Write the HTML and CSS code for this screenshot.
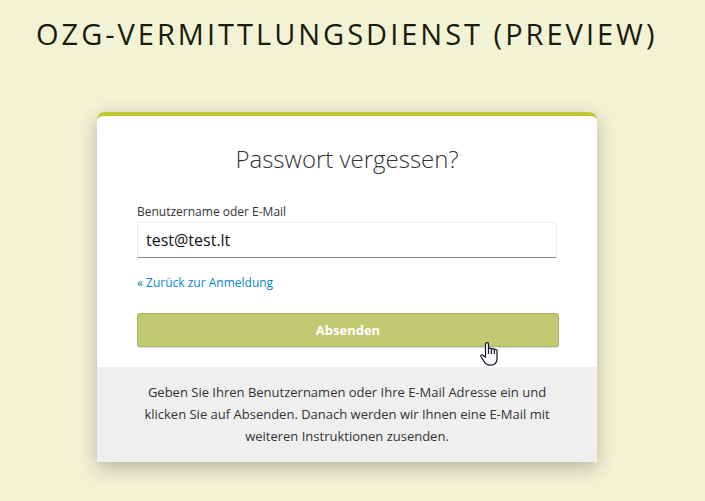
FILE: index.html
```html
<!DOCTYPE html>
<html lang="de">
<head>
<meta charset="utf-8">
<title>Passwort vergessen</title>
<link rel="stylesheet" href="styles.css">
</head>
<body>
<header class="brand">OZG-Vermittlungsdienst (Preview)</header>
<main class="card">
  <h1 class="title">Passwort vergessen?</h1>
  <form class="form">
    <label class="label" for="user">Benutzername oder E-Mail</label>
    <input class="input" id="user" type="text" value="test@test.lt">
    <p class="back"><a href="#">« Zurück zur Anmeldung</a></p>
    <button class="submit" type="button">Absenden
      <svg class="cursor" viewBox="0 0 18 24" width="18" height="24" aria-hidden="true">
        <path d="M5.500 15V2.200a1.500 1.500 0 0 1 3 0V7.500a1.400 1.400 0 0 1 2.900.3a1.400 1.400 0 0 1 2.900.6a1.400 1.400 0 0 1 2.700.9V16.500c0 4-2.500 6.600-6.600 6.600c-3.400 0-5.300-1.600-6.600-4.100L.9 14.500c-.5-1.300.9-2.200 2-1.300z"/>
        <path d="M8.500 7.500v4M11.400 8v3.500M14.300 8.500v3"/>
      </svg>
    </button>
  </form>
  <p class="info">Geben Sie Ihren Benutzernamen oder Ihre E-Mail Adresse ein und klicken Sie auf Absenden. Danach werden wir Ihnen eine E-Mail mit weiteren Instruktionen zusenden.</p>
</main>
</body>
</html>
```
FILE: styles.css
```css
* { box-sizing: border-box; }
body {
  margin: 0;
  height: 501px;
  overflow: hidden;
  background: #f2f3d5;
  font-family: "Open Sans", sans-serif;
  color: #333;
}
.brand {
  height: 112px;
  padding: 14px 0 0 36px;
  font-size: 29px;
  line-height: 40px;
  letter-spacing: 3px;
  text-transform: uppercase;
  white-space: nowrap;
  color: #1b1b0b;
}
.card {
  width: 500px;
  height: 350px;
  margin-left: 97px;
  background: #fff;
  border-top: 4px solid #c1c930;
  border-radius: 8px 8px 0 0;
  box-shadow: 0 6px 20px rgba(0, 0, 0, .26);
}
.title {
  margin: 0;
  padding-top: 27px;
  font-size: 24px;
  font-weight: 300;
  line-height: 32px;
  text-align: center;
}
.form { height: 192px; padding: 28px 38px 0 40px; }
.label { display: block; font-size: 12px; line-height: 18px; }
.input {
  display: block;
  width: 420px;
  height: 36px;
  margin-top: 1px;
  padding: 0 8px;
  border: 1px solid #ededed;
  border-bottom-color: #8b8b8b;
  font: 16px "Open Sans", sans-serif;
  color: #111;
}
.back { margin: 16px 0 0; font-size: 12px; line-height: 18px; }
.back a { color: #0088ce; text-decoration: none; }
.submit {
  display: block;
  position: relative;
  width: 422px;
  height: 34px;
  margin-top: 21px;
  padding: 0;
  border: 1px solid #abb463;
  border-radius: 3px;
  background: #c1ca70;
  box-shadow: 0 1px 1px rgba(0, 0, 0, .14);
  color: #fff;
  font: 700 13px "Open Sans", sans-serif;
}
.cursor { position: absolute; left: 342px; top: 28px; fill: #fff; stroke: #14142a; stroke-width: 1.2; stroke-linecap: round; }
.info {
  height: 95px;
  margin: 0;
  padding: 14px 44px;
  background: #efefef;
  font-size: 13px;
  line-height: 22px;
  text-align: center;
}
```
